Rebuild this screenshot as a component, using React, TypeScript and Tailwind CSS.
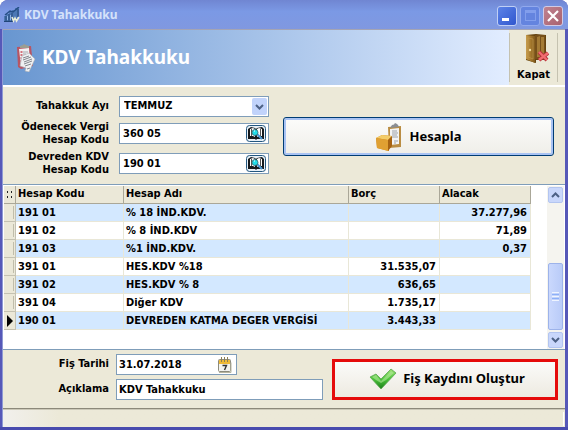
import { useState, type ReactNode } from "react";
import clsx from "clsx";

type Account = {
  code: string;
  name: string;
  debit?: string;
  credit?: string;
};

const accounts: Account[] = [
  { code: "191 01", name: "% 18 İND.KDV.", credit: "37.277,96" },
  { code: "191 02", name: "% 8 İND.KDV", credit: "71,89" },
  { code: "191 03", name: "%1 İND.KDV.", credit: "0,37" },
  { code: "391 01", name: "HES.KDV %18", debit: "31.535,07" },
  { code: "391 02", name: "HES.KDV % 8", debit: "636,65" },
  { code: "391 04", name: "Diğer KDV", debit: "1.735,17" },
  { code: "190 01", name: "DEVREDEN KATMA DEGER VERGİSİ", debit: "3.443,33" },
];

const AppIcon = () => (
  <svg width="16" height="16" viewBox="0 0 16 16" aria-hidden="true">
    <path d="M0 14V9h2V7h3V5h3V3h3V1h4v9h-2v4z" fill="#4c78b4" />
    <path d="M1 8l5-4 3 1 6-5" fill="none" stroke="#264f86" strokeWidth="1.5" />
    <path d="M2 9v5M5 7v7M8 6v8M14 2v8M0 14.5h9" stroke="#204477" />
    <path d="M3.5 9v4M6.5 8v5" stroke="#8fb4e8" />
    <path d="M8 10l1.5 4 1.5-3 1.5 3L15 10" fill="none" stroke="#e9edd8" strokeWidth="1.6" />
  </svg>
);

const ReportIcon = () => (
  <svg width="20" height="28" viewBox="0 0 20 28" aria-hidden="true">
    <path d="M1 3l14-1 2 20-12 3-3-2z" fill="#b85563" />
    <path d="M3 5l10-1 1 16-9 2z" fill="#f2f1f3" />
    <path d="M4 4V2l3-1 1-1 2 1 3 1v2z" fill="#9c9d91" />
    <path d="M4.5 8h2M4.5 11h2M4.5 14h1M4.5 17h1" stroke="#c64a57" strokeWidth="1.5" />
    <path d="M7 8h5M7 10h3" stroke="#a5a8ad" />
    <path d="M6 12l7-3 6 6-6 13-4-1 1-3-6-2z" fill="#eff0f2" stroke="#a9acb2" strokeWidth=".6" />
    <path d="M7 14l6-2M7 16l8-3M8 18l8-3M8 20l8-3M9 22l6-2M11 25l3-1" stroke="#84888f" />
  </svg>
);

const DoorIcon = () => (
  <svg width="30" height="31" viewBox="-6 0 30 31" aria-hidden="true">
    <defs>
      <linearGradient id="wood" x1="0" x2="1">
        <stop offset="0" stopColor="#c79d4e" />
        <stop offset=".5" stopColor="#a67a2e" />
        <stop offset="1" stopColor="#80591c" />
      </linearGradient>
    </defs>
    <path d="M1 2l10-1 10 1v25H11v3L1 27z" fill="#65430f" />
    <path d="M10 2h10v24H10z" fill="#76501a" />
    <path d="M12 4l3-1v21h-3zM16 4h3v20h-3z" fill="#a47b35" />
    <path d="M1 2l9 1v27l-9-4z" fill="url(#wood)" />
    <path d="M3 5l5 1v20l-5-2z" fill="none" stroke="#c39a50" strokeWidth=".6" />
    <circle cx="5" cy="17" r="1.2" fill="#f2dda0" />
    <path d="M14 19l8 8m1-7l-9 7" stroke="#b33038" strokeWidth="4" />
    <path d="M14 19l8 8m1-7l-9 7" stroke="#f16d70" strokeWidth="2.4" />
  </svg>
);

const BoxIcon = () => (
  <svg width="26" height="28" viewBox="0 0 26 28" aria-hidden="true">
    <path d="M12 4l13-1v21l-12 1z" fill="#ba8d43" />
    <path d="M14 6l9-1v16l-9 1z" fill="#f4f4f3" />
    <path d="M14 5l2-3 2-.5L19 0l2 1 1 1 1 2z" fill="#8b8e93" />
    <path d="M16 8h5M16 10h6M16 12h5M16 14h6M18 18h4M18 20h2" stroke="#9da1a8" />
    <path d="M0 15l6-3 10 1-3 4v11L1 25z" fill="#cd851c" />
    <path d="M0 15l6-3 10 1-4 4z" fill="#f3cc68" />
    <path d="M0 15l12 2v11L1 25z" fill="#e0a032" />
    <path d="M12 17l4-4v10l-4 5z" fill="#a76312" />
  </svg>
);

const BookIcon = () => (
  <svg width="20" height="17" viewBox="0 0 20 17" aria-hidden="true">
    <rect x=".5" y=".5" width="19" height="16" rx="3" fill="#e8f0f7" stroke="#23577f" />
    <path d="M2 4l3-2 4 1 1 1 1-1 5-1 2 2v10h-7l-1 1-1-1H2z" fill="#15191d" />
    <path d="M4 4l3-1 2 1v8l-2-1H4zM11 4l2-1 3 1v7h-3l-2 1z" fill="#fff" />
    <path d="M5.5 4v7M14.5 4v7" stroke="#555" />
    <path d="M11 9l5 5" stroke="#4d9bd6" strokeWidth="2.2" />
    <circle cx="9" cy="7.5" r="3" fill="#20dce9" stroke="#36616a" strokeWidth=".8" />
    <path d="M8 6h1" stroke="#fff" />
  </svg>
);

const CalendarIcon = () => (
  <svg width="14" height="16" viewBox="0 0 14 16" aria-hidden="true">
    <rect x=".5" y="2.5" width="12" height="12" rx="1" fill="#f3f3ef" stroke="#8c8b7c" />
    <path d="M1 3h11v4H1z" fill="#efb936" />
    <path d="M3.5 0v5M6.5 0v5M9.5 0v5" stroke="#8d8053" />
    <path d="M4.5 8.5h4L6.5 13" fill="none" stroke="#333" strokeWidth="1.4" />
    <path d="M1 15.5h12v-10" fill="none" stroke="#b7b59f" />
  </svg>
);

const CheckIcon = () => (
  <svg width="28" height="22" viewBox="0 0 28 22" aria-hidden="true">
    <defs>
      <linearGradient id="green" x1="0" y1="0" x2="0" y2="1">
        <stop offset="0" stopColor="#9ae070" />
        <stop offset=".5" stopColor="#4cc43a" />
        <stop offset="1" stopColor="#1b7d1a" />
      </linearGradient>
    </defs>
    <path d="M1 9l6-3 5 5L22 1l5 4-15 16z" fill="url(#green)" stroke="#5aa552" strokeWidth=".8" />
    <path d="M3 9l4-2 5 6L22 3l3 2-8 7-5 3-5-3z" fill="#c6efad" opacity=".5" />
  </svg>
);

const Chevron = ({ up = false }: { up?: boolean }) => (
  <svg width="9" height="6" viewBox="0 0 9 6" aria-hidden="true">
    <path d={up ? "M1 5l3.5-3.5L8 5" : "M1 1l3.5 3.5L8 1"} fill="none" stroke="#4d6185" strokeWidth="2" />
  </svg>
);

const CodeField = ({ id, label, value }: { id: string; label: ReactNode; value: string }) => (
  <>
    <label htmlFor={id} className="text-right leading-[13px]">
      {label}
    </label>
    <div className="flex h-[21px] items-center border border-[#7f9db9] bg-white pr-[2px]">
      <input id={id} defaultValue={value} className="h-full w-0 flex-1 px-[3px] outline-none" />
      <button type="button" aria-label="Hesap seç">
        <BookIcon />
      </button>
    </div>
  </>
);

const TitleBar = () => (
  <div className="flex h-[29px] items-center rounded-t-lg bg-linear-to-b from-[#7086d2] via-[#7b99e5] via-40% to-[#8098e0] pr-[5px] pl-1">
    <AppIcon />
    <span className="ml-1 flex-1 font-['Noto_Sans',sans-serif] text-[12px] text-[#d5e2fa]">KDV Tahakkuku</span>
    <div className="flex gap-[3px] pt-[2px]">
      <button
        type="button"
        aria-label="Küçült"
        className="flex size-5 items-end rounded-[3px] border border-[#c0cff5] bg-linear-to-br from-[#5d83e7] to-[#3056ce] p-1"
      >
        <span className="h-[3px] w-[7px] bg-white" />
      </button>
      <button
        type="button"
        aria-label="Ekranı kapla"
        disabled
        className="flex size-5 items-center justify-center rounded-[3px] border border-[#92a9ed] bg-[#6484df]"
      >
        <span className="size-[11px] border border-t-[3px] border-[#829eec]" />
      </button>
      <button
        type="button"
        aria-label="Pencereyi kapat"
        className="flex size-5 items-center justify-center rounded-[3px] border border-[#d1cbe5] bg-linear-to-br from-[#bf8390] to-[#a9616f]"
      >
        <svg width="12" height="12" viewBox="0 0 12 12" aria-hidden="true">
          <path d="M1 1l10 10M11 1L1 11" stroke="#fff" strokeWidth="2.2" />
        </svg>
      </button>
    </div>
  </div>
);

const Header = () => (
  <header className="flex h-[58px] border-t border-b-2 border-t-[#a4a4b4] border-b-white">
    <div className="flex flex-1 items-center bg-linear-to-r from-[#6896d0] to-[#e2edff] pl-[13px]">
      <ReportIcon />
      <h1 className="ml-[6px] font-['Noto_Sans',sans-serif] text-[19px] text-white">KDV Tahakkuku</h1>
    </div>
    <div className="flex w-14 py-[3px] pr-[7px]">
      <button
        type="button"
        className="flex w-full flex-col items-center border-x border-[#c5c2b0] leading-[13px]"
      >
        <DoorIcon />
        <span className="mt-1">Kapat</span>
      </button>
    </div>
  </header>
);

const AccountTable = () => {
  const [selected, setSelected] = useState("190 01");

  return (
    <section className="flex h-[166px] border-y border-[#7f9db9] bg-white pt-px pl-px">
      <div className="flex-1 pr-4">
        <table className="w-full table-fixed border-separate border-spacing-0">
          <thead>
            <tr className="h-[18px] text-left [&>*]:border-r [&>*]:border-b [&>*]:border-[#aaa798] [&>*]:bg-[#ebe8d8] [&>*]:p-0 [&>*]:pl-[2px]">
              <th className="w-3">
                <svg width="8" height="8" viewBox="0 0 8 8" aria-hidden="true">
                  <path d="M1 0h1v2H1zM5 0h1v2H5zM1 5h1v2H1zM5 5h1v2H5z" fill="#222" />
                </svg>
              </th>
              <th className="w-[108px]">Hesap Kodu</th>
              <th>Hesap Adı</th>
              <th className="w-[91px]">Borç</th>
              <th className="w-[91px]">Alacak</th>
            </tr>
          </thead>
          <tbody>
            {accounts.map(({ code, name, debit, credit }) => (
              <tr
                key={code}
                onClick={() => setSelected(code)}
                className="h-[18px] odd:bg-[#d3e8ff] [&>td]:border-r [&>td]:border-b [&>td]:border-[#e9e7d7] [&>td]:p-0 [&>td]:leading-[17px] [&>td:first-child]:border-[#c5c2b2]"
              >
                <td className="bg-[#ebe8d8]">
                  {selected === code ? (
                    <svg width="11" height="12" viewBox="0 0 11 12" className="block" aria-hidden="true">
                      <path d="M3 0l6 6-6 6z" fill="#000" />
                    </svg>
                  ) : (
                    <span className="ml-auto block h-[13px] w-[2px] border-l border-[#c0bdab]" />
                  )}
                </td>
                <td>
                  <span className="pl-[2px]">{code}</span>
                </td>
                <td className="whitespace-nowrap">
                  <span className="pl-[2px]">{name}</span>
                </td>
                <td className="text-right">
                  <span className="pr-[3px]">{debit}</span>
                </td>
                <td className="text-right">
                  <span className="pr-[3px]">{credit}</span>
                </td>
              </tr>
            ))}
          </tbody>
        </table>
      </div>
      <div className="mr-px flex w-[17px] flex-col bg-[#f5f4ef] p-px">
        <button
          type="button"
          aria-label="Yukarı kaydır"
          className="flex h-4 items-center justify-center rounded-[2px] border border-[#b3c5f0] bg-[#c9d7fb]"
        >
          <Chevron up />
        </button>
        <div className="flex flex-1 flex-col justify-end py-[2px]">
          <div className="flex h-[67px] flex-col items-center justify-center gap-px rounded-[2px] border border-[#9db3ea] bg-linear-to-r from-[#cad8fd] to-[#b9cbf8]">
            <span className="h-px w-[7px] bg-[#eef4ff]" />
            <span className="h-px w-[7px] bg-[#8cb0f8]" />
            <span className="h-px w-[7px] bg-[#eef4ff]" />
            <span className="h-px w-[7px] bg-[#8cb0f8]" />
            <span className="h-px w-[7px] bg-[#eef4ff]" />
          </div>
        </div>
        <button
          type="button"
          aria-label="Aşağı kaydır"
          className="flex h-4 items-center justify-center rounded-[2px] border border-[#b3c5f0] bg-[#c9d7fb]"
        >
          <Chevron />
        </button>
      </div>
    </section>
  );
};

const App = () => (
  <div className="rounded-t-lg bg-[#5658b8] font-['DejaVu_Sans_Condensed','DejaVu_Sans',sans-serif] text-[11px] font-bold text-black">
    <TitleBar />
    <main className="mr-[3px] ml-[2px] border-l border-[#8f9ad5] bg-[#ece9d8]">
      <Header />
      <section className="flex items-center pt-[10px] pr-[11px] pb-2">
        <div className="grid grid-cols-[106px_150px] grid-rows-[19px_26px_26px] items-center gap-x-[10px] gap-y-1">
          <label htmlFor="month" className="text-right">
            Tahakkuk Ayı
          </label>
          <div className="relative">
            <select
              id="month"
              defaultValue="TEMMUZ"
              className="block h-[21px] w-full appearance-none border border-[#7f9db9] bg-white pl-1 outline-none"
            >
              <option>HAZİRAN</option>
              <option>TEMMUZ</option>
              <option>AĞUSTOS</option>
            </select>
            <span className="pointer-events-none absolute top-[2px] right-[2px] flex h-[17px] w-[15px] items-center justify-center rounded-[2px] bg-[#c1d3fb]">
              <Chevron />
            </span>
          </div>
          <CodeField
            id="payable"
            label={
              <>
                Ödenecek Vergi
                <br />
                Hesap Kodu
              </>
            }
            value="360 05"
          />
          <CodeField
            id="carried"
            label={
              <>
                Devreden KDV
                <br />
                Hesap Kodu
              </>
            }
            value="190 01"
          />
        </div>
        <button
          type="button"
          className="ml-[14px] flex h-[39px] flex-1 items-center justify-center gap-2 rounded-[3px] border border-[#003c74] bg-linear-to-b from-[#fcfcfb] to-[#efeee8] font-['Noto_Sans',sans-serif] text-[13px] inset-ring-2 inset-ring-[#a9c3f3]"
        >
          <BoxIcon />
          Hesapla
        </button>
      </section>
      <AccountTable />
      <section className="flex items-center justify-between border-b border-[#8c897a] pt-1 pr-[7px] pb-2">
        <div className="grid grid-cols-[106px_207px] items-center gap-x-[7px] gap-y-1">
          <label htmlFor="date" className="text-right">
            Fiş Tarihi
          </label>
          <div className="flex h-[21px] w-[121px] items-center border border-[#7f9db9] bg-white pr-1">
            <input id="date" defaultValue="31.07.2018" className="h-full w-0 flex-1 px-[2px] outline-none" />
            <button type="button" aria-label="Takvim">
              <CalendarIcon />
            </button>
          </div>
          <label htmlFor="note" className="text-right">
            Açıklama
          </label>
          <input
            id="note"
            defaultValue="KDV Tahakkuku"
            className="h-[21px] w-full border border-[#7f9db9] bg-white px-[2px] outline-none"
          />
        </div>
        <button
          type="button"
          className={clsx(
            "mt-1 ml-[9px] flex h-[41px] flex-1 items-center justify-center gap-[6px] whitespace-nowrap",
            "border-[3px] border-[#e50b0b] bg-linear-to-b from-[#fbfbf9] to-[#edeae1] pl-1",
            "font-['Noto_Sans',sans-serif] text-[13px]",
          )}
        >
          <CheckIcon />
          Fiş Kaydını Oluştur
        </button>
      </section>
      <footer className="flex h-[18px] justify-end border-t border-[#cbc8b8] bg-linear-to-r from-[#f1f0ec] to-[#ece9d8] to-10% pt-[2px] pr-px">
        <span className="h-[14px] border-r border-white" />
      </footer>
    </main>
    <div className="h-[3px] bg-[#484bae]" />
  </div>
);

export default App;
